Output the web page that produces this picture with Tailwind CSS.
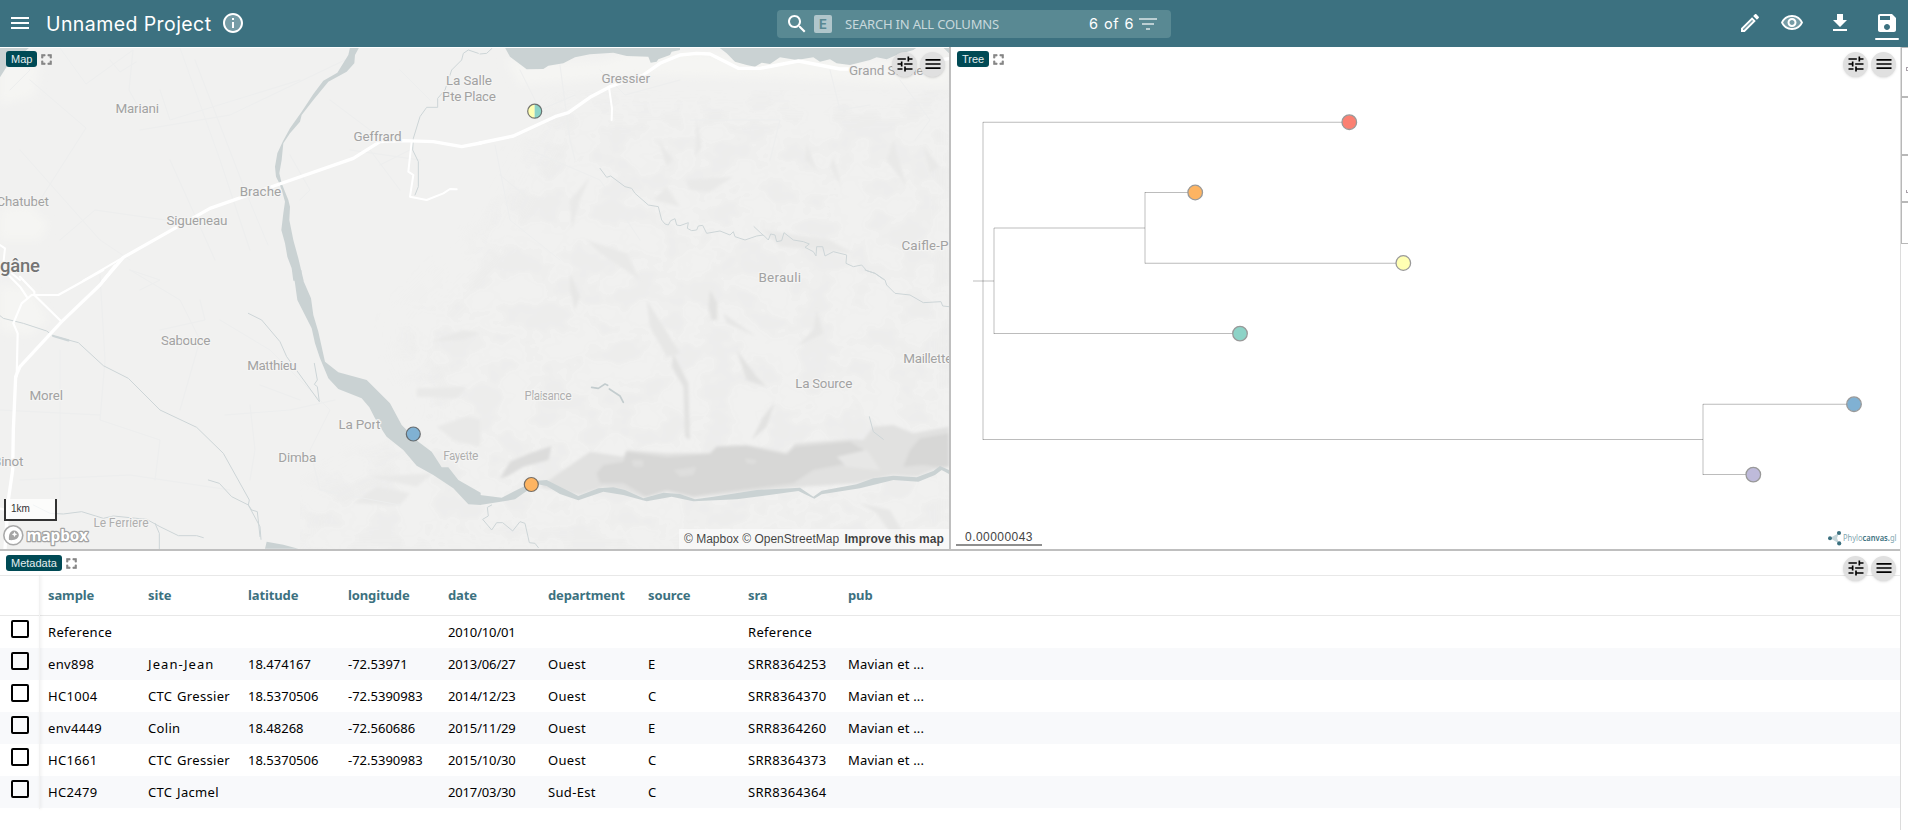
<!DOCTYPE html>
<html lang="en">
<head>
<meta charset="utf-8">
<title>Unnamed Project</title>
<script src="https://cdn.jsdelivr.net/npm/@tailwindcss/browser@4"></script>
</head>
<body class="h-[830px] w-[1908px] overflow-hidden bg-white flex flex-col font-['Noto_Sans',sans-serif] text-black">

<svg width="0" height="0" class="hidden">
  <symbol id="menu" viewBox="0 0 24 24"><path d="M3 18h18v-2H3v2zm0-5h18v-2H3v2zm0-7v2h18V6H3z"/></symbol>
  <symbol id="tune" viewBox="0 0 24 24"><path d="M3 17v2h6v-2H3zM3 5v2h10V5H3zm10 16v-2h8v-2h-8v-2h-2v6h2zM7 9v2H3v2h4v2h2V9H7zm14 4v-2H11v2h10zm-6-4h2V7h4V5h-4V3h-2v6z"/></symbol>
  <symbol id="full" viewBox="0 0 24 24"><path d="M7 14H5v5h5v-2H7v-3zm-2-4h2V7h3V5H5v5zm12 7h-3v2h5v-5h-2v3zM14 5v2h3v3h2V5h-5z" stroke="currentColor"/></symbol>
</svg>

<header class="h-[47px] shrink-0 bg-[#3c7180] text-white fill-white flex items-center pl-2 pr-[9px] pb-px">
  <svg class="size-6"><use href="#menu"/></svg>
  <h1 class="ml-[14px] w-[165px] text-[19.5px] leading-6 tracking-[0.42px] font-['Inter',sans-serif] whitespace-nowrap pt-0.5">Unnamed Project</h1>
  <svg class="size-6 ml-[10px]" viewBox="0 0 24 24"><circle cx="12" cy="12" r="9" opacity=".3"/><path d="M11 7h2v2h-2zm0 4h2v6h-2zm1-9C6.48 2 2 6.48 2 12s4.480 10 10 10 10-4.480 10-10S17.520 2 12 2zm0 18c-4.410 0-8-3.590-8-8s3.590-8 8-8 8 3.590 8 8-3.590 8-8 8z"/></svg>
  <div class="ml-[532px] w-[394px] h-7 mt-px rounded bg-[#598993] flex items-center pl-2">
    <svg class="size-6" viewBox="0 0 24 24"><path d="M15.5 14h-.79l-.28-.27C15.410 12.590 16 11.110 16 9.500 16 5.910 13.090 3 9.500 3S3 5.910 3 9.500 5.910 16 9.500 16c1.610 0 3.090-.59 4.230-1.570l.27.28v.79l5 4.990L20.490 19l-4.990-5zm-6 0C7.010 14 5 11.990 5 9.500S7.010 5 9.500 5 14 7.010 14 9.500 11.990 14 9.500 14z"/></svg>
    <span class="ml-[5px] size-[18px] rounded-xs bg-[#b0c6cb] text-[#598993] text-[13px] leading-[18px] font-bold text-center font-['Inter',sans-serif]">E</span>
    <span class="ml-[13px] w-[244px] text-[13px] leading-5 tracking-[-0.2px] text-[#c8d8dc] whitespace-nowrap">SEARCH IN ALL COLUMNS</span>
    <span class="w-[47px] text-[14.5px] leading-5 tracking-[0.4px] [word-spacing:1.2px] whitespace-nowrap font-['Inter',sans-serif]">6 of 6</span>
    <svg class="size-6 opacity-60" viewBox="0 0 24 24"><path d="M10 18h4v-2h-4v2zM3 6v2h18V6H3zm3 7h12v-2H6v2z"/></svg>
  </div>
  <div class="ml-auto flex items-center">
    <svg class="size-6 mr-[18px]" viewBox="0 0 24 24"><path d="M5 18.080V19h.92l9.060-9.060-.92-.92z" opacity=".3"/><path d="M20.710 7.040c.39-.39.39-1.020 0-1.410l-2.340-2.340c-.2-.2-.45-.29-.71-.29s-.51.1-.7.290l-1.830 1.830 3.750 3.750 1.830-1.830zM3 17.250V21h3.750L17.810 9.940l-3.750-3.750L3 17.250zM5.920 19H5v-.92l9.060-9.060.92.920L5.920 19z"/></svg>
    <svg class="size-6 mr-6" viewBox="0 0 24 24"><path d="M12 6c-3.790 0-7.170 2.130-8.820 5.500C4.830 14.870 8.210 17 12 17s7.170-2.130 8.820-5.500C19.170 8.130 15.790 6 12 6z" opacity=".3"/><path d="M12 4C7 4 2.730 7.110 1 11.500 2.730 15.890 7 19 12 19s9.270-3.110 11-7.500C21.270 7.110 17 4 12 4zm0 13c-3.790 0-7.170-2.130-8.820-5.500C4.830 8.130 8.210 6 12 6s7.170 2.130 8.820 5.500C19.170 14.870 15.790 17 12 17zm0-10c-2.480 0-4.500 2.020-4.500 4.500S9.520 16 12 16s4.500-2.020 4.500-4.500S14.480 7 12 7zm0 7c-1.380 0-2.500-1.120-2.500-2.500S10.620 9 12 9s2.500 1.120 2.500 2.500S13.380 14 12 14z"/></svg>
    <svg class="size-6 mr-[23px]" viewBox="0 0 24 24"><path d="M19 9h-4V3H9v6H5l7 7 7-7zM5 18v2h14v-2H5z"/></svg>
    <span class="relative size-6"><svg class="size-6" viewBox="0 0 24 24"><path d="M17 3H5c-1.110 0-2 .9-2 2v14c0 1.100.89 2 2 2h14c1.100 0 2-.9 2-2V7l-4-4zm-5 16c-1.660 0-3-1.340-3-3s1.340-3 3-3 3 1.340 3 3-1.340 3-3 3zm3-10H5V5h10v4z"/></svg><i class="absolute left-0 top-[27px] w-6 h-0.5 rounded bg-white"></i></span>
  </div>
</header>

<div class="flex flex-1 min-h-0">
<main class="w-[1900px] flex flex-col">
  <div class="flex h-[502px] shrink-0 pt-px">
    <!-- Map pane -->
    <section class="relative w-[949px] h-[501px] overflow-hidden bg-[#f1f1f0]">
      <svg class="absolute inset-0" width="949" height="501" viewBox="0 48 949 501" fill="none" stroke-linejoin="round" stroke-linecap="round">
        <defs>
          <filter id="relief" x="0" y="0" width="100%" height="100%"><feTurbulence type="fractalNoise" baseFrequency=".03 .036" numOctaves="3" seed="11"/><feColorMatrix values="0 0 0 0 .78  0 0 0 0 .78  0 0 0 0 .77  1.6 0 0 0 -.2"/><feComponentTransfer><feFuncA type="discrete" tableValues="0 0 0 0 .05 0 .12 .18 .26 .3"/></feComponentTransfer></filter>
          <filter id="soft"><feGaussianBlur stdDeviation="4"/></filter>
          <filter id="soft2"><feGaussianBlur stdDeviation="14"/></filter>
          <mask id="hills"><path d="M560 105 960 95V560H300V500L440 420 400 330 480 250 520 180z" fill="#fff" filter="url(#soft2)"/></mask>
        </defs>
        <g mask="url(#hills)"><rect x="300" y="90" width="649" height="470" filter="url(#relief)"/></g>
        <!-- ridge -->
        <g transform="translate(480 270) scale(.33333)" filter="url(#soft)">
          <path d="M180 650 250 600 330 545 430 560 440 540 560 550 690 548 710 528 800 524 920 548 945 520 1110 508 1150 510 1180 470 1240 465 1300 490 1407 470V592L1360 600 1310 620 1240 615 1130 640 960 650 700 678 640 684 560 665 490 684 430 660 370 650 300 676z" fill="#e1e1e0"/>
          <path d="M360 640 350 610 370 585 430 575 440 545 560 562 690 552 710 532 800 528 920 554 945 530 1110 515 1160 545 1130 575 1000 600 940 640 700 670 640 678 560 660 500 680 430 640z" fill="#d7d7d6"/>
          <path d="M455 570 490 570 490 590 460 590zM795 565 830 570 825 582 800 580zM580 600 650 590 640 615 600 620z" fill="#dededd"/>
          <path d="M1270 590 1290 540 1320 505 1407 490V590L1370 590 1330 585z" fill="#d7d7d6"/>
          <path d="M60 625 90 575 150 550 215 528 205 570 130 590 80 620z" fill="#dcdcdb"/>
          <path d="M690 60 712 100 712 150 695 150 685 110zM580 250 625 340 630 510 615 500 610 350 575 290zM770 240 830 320 860 350 800 330zM850 440 885 395 860 470 815 510z" fill="#e2e2e1"/>
          <path d="M500 90 600 250 560 260 510 170zM1010 120 1030 190 950 230 1000 180zM730 130 830 200 740 160zM270 10 300 80 285 120 270 60zM1140 700 1230 720 1270 790 1240 800 1190 730zM1070 560 1160 540 1200 600 1100 590z" fill="#e7e7e6"/>
        </g>
        <g transform="translate(480 0) scale(.33333)" fill="#e9e9e8" filter="url(#soft)">
          <path d="M270 600 330 530 300 600 275 690zM535 420 560 500 580 480zM650 350 665 440 645 470zM620 540 760 530 690 575 630 570zM560 560 600 620 520 600zM980 430 1010 510 975 480zM1060 470 1085 560 1050 500zM1240 420 1280 560 1220 480zM1330 440 1380 500 1350 520zM320 720 440 760 480 840 360 760zM850 690 1050 720 1120 760 900 740z"/>
        </g>
        <g transform="translate(0 270) scale(.33333)" fill="#e9e9e8" filter="url(#soft)"><path d="M1060 700 1130 650 1230 670 1200 705zM1250 355 1400 350 1370 385 1250 380zM1310 470 1400 440 1440 450V530L1360 510zM1290 215 1390 180 1440 190 1390 210zM1110 620 1300 610 1250 650z"/></g>
        <!-- settled areas -->
        <g fill="#f5f5f3" filter="url(#soft)"><path d="M0 210 30 205 48 225 40 240 0 240zM0 285 30 290 48 320 30 335 0 330zM0 60 40 60 35 95 0 105zM505 60 600 62 640 50 900 62 949 60V85L780 78 640 75 520 85z"/></g>
        <!-- field tracks -->
        <g stroke="#edeeee" stroke-width="1">
          <path d="M60 48 86 84 133 50 129 90 140 110M30 80 86 128 40 200M180 48 220 160 250 250M195 60 245 190 268 245M140 130 230 115 345 60M160 90 170 120 300 80M20 150 100 240 130 260M60 240 95 210 200 225M170 160 215 260M130 270 180 300 200 340 180 410M100 275 105 360 100 420 160 440 155 480M60 350 60 500M0 410 100 415M220 320 270 350 330 410 310 450 320 490 400 505M250 405 255 450 250 480M225 415 290 410 335 400M20 480 130 475 230 490M290 155 310 190 300 200M330 100 370 130M350 150 420 160M400 70 430 100M520 70 540 110 575 95M560 65 570 140 575 160M530 150 600 180 640 240M495 145 510 220 560 260M690 120 780 120 770 160M830 70 840 110 870 105M900 80 930 120 915 140M600 70 625 95 680 80"/>
          <path d="M110 60 120 72 136 62M10 90 30 70 20 60M140 290 160 280 130 270M200 300 205 320 160 330M260 385 300 400M380 165 410 150M370 150 400 190M500 175 530 200"/>
        </g>
        <!-- streams -->
        <g stroke="#cdd5d7" stroke-width="3">
          <g transform="scale(.33333)"><path d="M1435 160 1405 150 1390 160 1385 180 1355 210 1335 270 1313 295 1313 322 1280 322 1260 350 1240 415 1238 450 1255 485 1255 560 1245 585"/></g>
          <g transform="translate(480 0) scale(.33333)"><path d="M0 162 20 160 36 145M360 505 380 532 392 528 435 560 455 565 465 580 505 615 535 620 545 660 555 672 565 675 572 662 585 656 590 675 600 677 625 668 622 685 635 692 650 690 655 678 668 676 680 700 720 693 750 705 760 695 765 710 795 720 830 708 850 705 865 720 872 702 885 705 890 725 905 722 912 698 940 720 970 725 988 732 975 742 1000 755 1008 768 1010 740 1028 740 1035 768 1060 755 1100 765 1098 790 1120 800 1145 795 1160 812 1185 820 1210 838M822 680 850 706"/></g>
          <g transform="translate(480 270) scale(.33333)"><path d="M1155 0 1185 10 1215 30 1220 45 1245 70 1290 75 1330 98 1383 95 1388 108 1407 110M1168 440 1180 485 1210 508M35 705 22 712 25 738 8 748 35 780 50 758 68 758 98 783 120 755 135 760 148 818 165 820 175 833"/><path d="M335 352 355 355 375 342 383 346M388 357 420 378 430 397" stroke="#c3ccce" stroke-width="5"/></g>
          <g transform="translate(0 270) scale(.33333)"><path d="M0 137 10 145 70 160 140 183 160 198 235 218 310 287 385 325 480 420 590 472 670 550 748 690 745 705 780 770 783 808M625 630 658 640 695 680 745 705 755 720 772 725 780 800M745 130 785 150 840 215 860 260 958 395 952 350 943 343 952 330 943 280M100 705 130 720 150 730 190 732 245 725 310 745 340 738 440 748 480 770 535 797 590 797 610 803M465 760 478 790 478 836"/><path d="M160 198 205 211" stroke-width="7"/></g>
        </g>
        <!-- water -->
        <g fill="#cad2d3">
          <path transform="scale(.33333)" d="M1050 143 1045 165 1012 218 970 242 940 282 905 335 870 385 848 425 832 460 825 500 828 530 838 550 848 580 855 605 850 640 844 690 855 730 862 770 875 805 880 842H911L895 775 880 720 868 660 870 620 865 600 855 575 845 550 838 520 845 480 850 430 870 400 900 365 905 345 940 300 985 245 1040 215 1063 190 1065 165 1077 143zM0 143H88L20 200 0 232z"/>
          <path transform="translate(0 270) scale(.33333)" d="M878 0 885 40 892 90 935 175 945 220 960 265 985 325 1015 357 1085 385 1108 412 1125 445 1150 485 1160 500 1210 540 1250 587 1300 615 1360 655 1405 703 1442 705V668L1375 630 1345 592 1325 592 1295 545 1255 515 1205 465 1170 400 1100 330 1015 307 975 275 965 230 955 185 940 135 933 85 905 20 904 0zM800 815 850 824 895 836H795z"/>
          <path transform="translate(480 270) scale(.33333)" d="M0 675 65 683 100 665 130 650 170 632 200 630 240 650 295 678 355 655 400 652 435 660 490 685 550 668 600 672 645 688 700 680 830 660 960 653 1000 680 1025 662 1130 643 1180 625 1240 617 1310 622 1360 603 1380 588 1407 600V612L1385 600 1365 615 1315 635 1240 630 1140 655 1025 673 1003 686 955 663 770 688 640 694 575 680 500 694 430 675 370 665 295 691 240 672 200 648 170 642 105 688 0 705z"/>
          <path transform="translate(480 0) scale(.33333)" d="M75 143 90 170 140 208 190 207 205 197 250 190 285 172 330 163 400 158 440 168 505 170 512 188 530 185 535 178 570 165 575 155 600 150V143zM718 143 740 160 765 185 800 195 825 200 845 188 870 192 900 172 950 180 1000 172 1020 185 1050 178 1070 190 1110 195 1170 180 1190 172 1220 178 1250 165 1300 150 1310 143zM1390 143H1407V160z"/>
        </g>
        <!-- roads -->
        <g stroke="#fff" stroke-width="10">
          <g transform="scale(.33333)"><path d="M310 842 370 772 630 625 830 555 1060 475 1140 425 1210 422 1300 425 1385 440 1442 429"/><path d="M370 772 250 842M1235 425 1225 515 1240 525 1230 590 1280 600 1330 580 1350 567 1370 568M0 735 15 745 10 790M35 820 60 840" stroke-width="6"/></g>
          <g transform="translate(480 0) scale(.33333)"><path d="M0 429 100 408 225 350 265 338 330 292 390 260 490 225 540 190 600 165 650 160 690 162 775 205 840 205 955 183 1080 207 1120 207M1380 180 1407 176"/><path d="M387 262 396 325 395 360" stroke-width="6"/></g>
          <g transform="translate(0 270) scale(.33333)"><path d="M345 -12 300 45 185 155 60 290 47 320 40 480 38 600 25 690 15 836"/><path d="M310 0 175 75 95 75 65 100 40 160 53 190 50 320M60 20 103 65 103 75 185 155M20 10 60 50 80 80M0 716 40 725" stroke-width="6.500"/></g>
        </g>
        <!-- place names -->
        <g transform="translate(0 -.5)" font-family="Roboto, sans-serif" font-size="13.5" fill="#a2a2a2" stroke="#f4f4f3" stroke-width="2.500" paint-order="stroke" lengthAdjust="spacingAndGlyphs">
          <text x="115.500" y="113.300" textLength="43.500">Mariani</text>
          <text x="446" y="85" textLength="46">La Salle</text>
          <text x="442" y="101.500" textLength="54">Pte Place</text>
          <text x="353.500" y="141.500" textLength="48">Geffrard</text>
          <text x="239.700" y="196" textLength="41.500">Brache</text>
          <text x="166.500" y="225" textLength="61">Sigueneau</text>
          <text x="-3.500" y="206.800" textLength="52.500">Chatubet</text>
          <text x="601.500" y="83.300" textLength="48.500">Gressier</text>
          <text x="849" y="75" textLength="74.500">Grand Saline</text>
          <text x="901.500" y="250.700" textLength="47">Caifle-P</text>
          <text x="758.500" y="282.500" textLength="42.500">Berauli</text>
          <text x="903.300" y="363.500" textLength="49">Maillette</text>
          <text x="795.300" y="388.800" textLength="57">La Source</text>
          <text x="161" y="345" textLength="49.500">Sabouce</text>
          <text x="247.300" y="370.500" textLength="49.500">Matthieu</text>
          <text x="29.500" y="400" textLength="33.500">Morel</text>
          <text x="338.500" y="429.500" textLength="42">La Port</text>
          <text x="278.300" y="462" textLength="38">Dimba</text>
          <text x="-7" y="466" textLength="30.500">Binot</text>
          <g font-size="12" fill="#aeaeae">
            <text x="524.500" y="400.300" textLength="47">Plaisance</text>
            <text x="443.300" y="460.800" textLength="35">Fayette</text>
            <text x="93.500" y="527.700" textLength="55">Le Ferriere</text>
          </g>
          <text x="0" y="272" font-size="18.500" font-weight="500" fill="#747474" textLength="40">gâne</text>
        </g>
        <!-- markers -->
        <g stroke="#555" stroke-opacity=".8" stroke-width="1.200">
          <g stroke="none"><path d="M534.700 104.200a7 7 0 0 0 0 14z" fill="#ffffb3"/><path d="M534.700 104.200a7 7 0 0 1 0 14z" fill="#8dd3c7"/></g>
          <circle cx="534.700" cy="111.200" r="7"/>
          <circle cx="413.300" cy="434" r="7" fill="#80b1d3"/>
          <circle cx="531.300" cy="484.500" r="7" fill="#fdb462"/>
        </g>
        <!-- mapbox wordmark -->
        <circle cx="13.300" cy="535.300" r="9.500" fill="#fff" stroke="#a9a9a9" stroke-width="1.600"/>
        <path d="M9 540c-.4-4 .3-7.500 3-9 3-1.500 6.500.5 6.800 3.500.4 4-4 6.200-9.800 5.500z" fill="#a5a5a5"/>
        <path d="M14.500 531.500l.9 1.900 1.900.9-1.900.9-.9 1.900-.9-1.900-1.900-.9 1.900-.9z" fill="#fff"/>
        <text x="26.500" y="541" font-family="Open Sans, sans-serif" font-weight="700" font-size="16" textLength="61.500" lengthAdjust="spacingAndGlyphs" fill="#fff" stroke="#a3a3a3" stroke-width="2.600" paint-order="stroke">mapbox</text>
      </svg>
      <div class="absolute left-1 bottom-7 w-[53px] h-[22px] border-2 border-t-0 border-[#333] bg-white/75 pl-[5px] text-[10px] leading-[20px] text-[#333] font-['Liberation_Sans',sans-serif]">1km</div>
      <div class="absolute right-0 bottom-0 w-[270px] h-5 bg-white/50 pl-[5px] text-[12px] leading-5 text-black/75 whitespace-nowrap font-['Liberation_Sans',sans-serif]">© Mapbox © OpenStreetMap <b class="ml-[2px]">Improve this map</b></div>
      <div class="absolute left-1.5 top-[3px] flex items-center gap-px">
        <span class="h-4 rounded-[3px] bg-[#004a55] px-[5px] text-[11px] leading-4 text-[#e6eef0] font-['Liberation_Sans',sans-serif]">Map</span>
        <svg class="size-[17px] -my-px fill-[#888] text-[#888]"><use href="#full"/></svg>
      </div>
      <div class="absolute right-1 top-[4px] flex gap-[3px]">
        <span class="size-[25px] rounded-full bg-[#e0e0e0] shadow flex pl-[3px] pt-[2px]"><svg class="size-5"><use href="#tune"/></svg></span>
        <span class="size-[25px] rounded-full bg-[#e0e0e0] shadow flex pl-[3px] pt-[2px]"><svg class="size-5"><use href="#menu"/></svg></span>
      </div>
    </section>
    <div class="w-0.5 h-[502px] -mt-px bg-[#bfbfbf]"></div>
    <!-- Tree pane -->
    <section class="relative w-[949px] h-[501px] overflow-hidden bg-white">
      <svg class="absolute inset-0" width="949" height="501" viewBox="951 48 949 501" fill="none">
        <g stroke="#222" stroke-opacity=".3" stroke-width="1.100">
          <path d="M983 122.200H1349M994 228H1145M1145 192.500H1195M1145 263.200H1403M994 333.500H1240M983 439.500H1703M1703 404.200H1854M1703 474.500H1753"/>
          <path d="M973 281H994" stroke-width="2" stroke-opacity=".15"/>
          <path d="M983 122V440M994 228V334M1145 192V263.500M1703 404V475" stroke-width="1.900" stroke-opacity=".15"/>
        </g>
        <g stroke="#999" stroke-width="1.300">
          <circle cx="1349.300" cy="122.200" r="7.300" fill="#fb8072"/>
          <circle cx="1195.200" cy="192.500" r="7.300" fill="#fdb462"/>
          <circle cx="1403.300" cy="263" r="7.300" fill="#ffffb3"/>
          <circle cx="1240" cy="333.600" r="7.300" fill="#8dd3c7"/>
          <circle cx="1854" cy="404.200" r="7.300" fill="#80b1d3"/>
          <circle cx="1753.300" cy="474.600" r="7.300" fill="#bebada"/>
        </g>
        <g fill="#3c7180">
          <path d="M1830 538 1839 533 1837 538 1839 543.500z" fill="#c4d5d9"/><circle cx="1830" cy="538.200" r="2"/><circle cx="1839" cy="533" r="2.100"/><circle cx="1839.200" cy="543.400" r="2.100"/>
          <text x="1843" y="541.300" font-family="Noto Sans, sans-serif" font-size="8.500" textLength="53.500" lengthAdjust="spacingAndGlyphs"><tspan fill="#7fa5af">Phylo</tspan><tspan font-weight="600">canvas.</tspan><tspan fill="#7fa5af">gl</tspan></text>
        </g>
      </svg>
      <div class="absolute left-[5px] bottom-[3px] w-[86px] h-[17px] border-b-2 border-[#8f8f8f] text-center text-[12px] leading-[17px] text-[#444] tracking-[0.45px] font-['Liberation_Sans',sans-serif]">0.00000043</div>
      <div class="absolute left-1.5 top-[3px] flex items-center gap-px">
        <span class="h-4 rounded-[3px] bg-[#004a55] px-[5px] text-[11px] leading-4 text-[#e6eef0] font-['Liberation_Sans',sans-serif]">Tree</span>
        <svg class="size-[17px] -my-px fill-[#888] text-[#888]"><use href="#full"/></svg>
      </div>
      <div class="absolute right-1 top-[4px] flex gap-[3px]">
        <span class="size-[25px] rounded-full bg-[#e0e0e0] shadow flex pl-[3px] pt-[2px]"><svg class="size-5"><use href="#tune"/></svg></span>
        <span class="size-[25px] rounded-full bg-[#e0e0e0] shadow flex pl-[3px] pt-[2px]"><svg class="size-5"><use href="#menu"/></svg></span>
      </div>
    </section>
  </div>
  <div class="h-0.5 shrink-0 bg-[#bfbfbf]"></div>
  <!-- Metadata pane -->
  <section class="relative flex-1">
    <div class="h-[25px] border-b border-[#e8e8e8] flex items-center gap-px pl-1.5">
      <span class="h-4 rounded-[3px] bg-[#004a55] px-[5px] text-[11px] leading-4 text-[#e6eef0] font-['Liberation_Sans',sans-serif]">Metadata</span>
      <svg class="size-[17px] fill-[#888] text-[#888]"><use href="#full"/></svg>
    </div>
    <div class="absolute right-1 top-[5px] flex gap-[3px] z-10">
      <span class="size-[25px] rounded-full bg-[#e0e0e0] shadow flex pl-[3px] pt-[2px]"><svg class="size-5"><use href="#tune"/></svg></span>
      <span class="size-[25px] rounded-full bg-[#e0e0e0] shadow flex pl-[3px] pt-[2px]"><svg class="size-5"><use href="#menu"/></svg></span>
    </div>
    <div id="table" class="relative text-[13px] whitespace-nowrap">
      <div class="grid grid-cols-[40px_repeat(9,100px)] h-10 border-b border-[#e8e8e8] items-center font-bold tracking-[-0.12px] text-[#3c7180]">
        <span></span><span class="pl-2">sample</span><span class="pl-2">site</span><span class="pl-2">latitude</span><span class="pl-2">longitude</span><span class="pl-2">date</span><span class="pl-2">department</span><span class="pl-2">source</span><span class="pl-2">sra</span><span class="pl-2">pub</span>
      </div>
      <i class="absolute left-[39px] top-0 w-px h-[233px] bg-[#f2f2f2] shadow-[1px_0_3px_rgba(0,0,0,0.12)]"></i>
    </div>
  </section>
</main>
<!-- Collapsed side panel -->
<aside class="w-2 border-l border-[#dcdcdc]">
  <div class="border-l border-t border-[#b8b8b8] h-[49px] flex justify-end pt-[19px]"><i class="w-0.5 h-1 border-l border-y border-[#a8a0a8]"></i></div>
  <div class="border-l border-t-2 border-[#b8b8b8] h-[58px]"></div>
  <div class="border-l border-t-2 border-[#b8b8b8] h-[47px] flex justify-end items-end pb-2"><i class="w-0.5 h-[3px] border-l border-b border-[#a8a0a8]"></i></div>
  <div class="border-l border-y-2 border-b border-[#b8b8b8] h-[43px]"></div>
</aside>
</div>

<script>
const rows = [
  ["Reference","","","","2010/10/01","","","Reference",""],
  ["env898","Jean-Jean","18.474167","-72.53971","2013/06/27","Ouest","E","SRR8364253","Mavian et ..."],
  ["HC1004","CTC Gressier","18.5370506","-72.5390983","2014/12/23","Ouest","C","SRR8364370","Mavian et ..."],
  ["env4449","Colin","18.48268","-72.560686","2015/11/29","Ouest","E","SRR8364260","Mavian et ..."],
  ["HC1661","CTC Gressier","18.5370506","-72.5390983","2015/10/30","Ouest","C","SRR8364373","Mavian et ..."],
  ["HC2479","CTC Jacmel","","","2017/03/30","Sud-Est","C","SRR8364364",""]
];
const cell = c => {
  if (/^[-\d]/.test(c)) return `<span class="pl-2 ${c.includes("/") ? "tracking-[-0.15px]" : ""}">${c}</span>`;
  if (c.startsWith("Jean")) return `<span class="pl-2 tracking-[1.1px]">${c}</span>`;
  if (c.startsWith("Mavian")) return `<span class="pl-2 tracking-[0.2px]">${c}</span>`;
  return `<span class="pl-2 tracking-[0.32px] [word-spacing:1px]">${c}</span>`;
};
document.getElementById("table").insertAdjacentHTML("beforeend", rows.map((r, i) =>
  `<div class="grid grid-cols-[40px_repeat(9,100px)] h-8 ${i % 2 ? "bg-[#f8f9fb]" : "bg-white"} leading-[32px]">
    <span class="pl-[11px] pt-1"><i class="block size-[18px] rounded-xs border-2 border-black"></i></span>${r.map(cell).join("")}
  </div>`).join(""));
</script>
</body>
</html>
